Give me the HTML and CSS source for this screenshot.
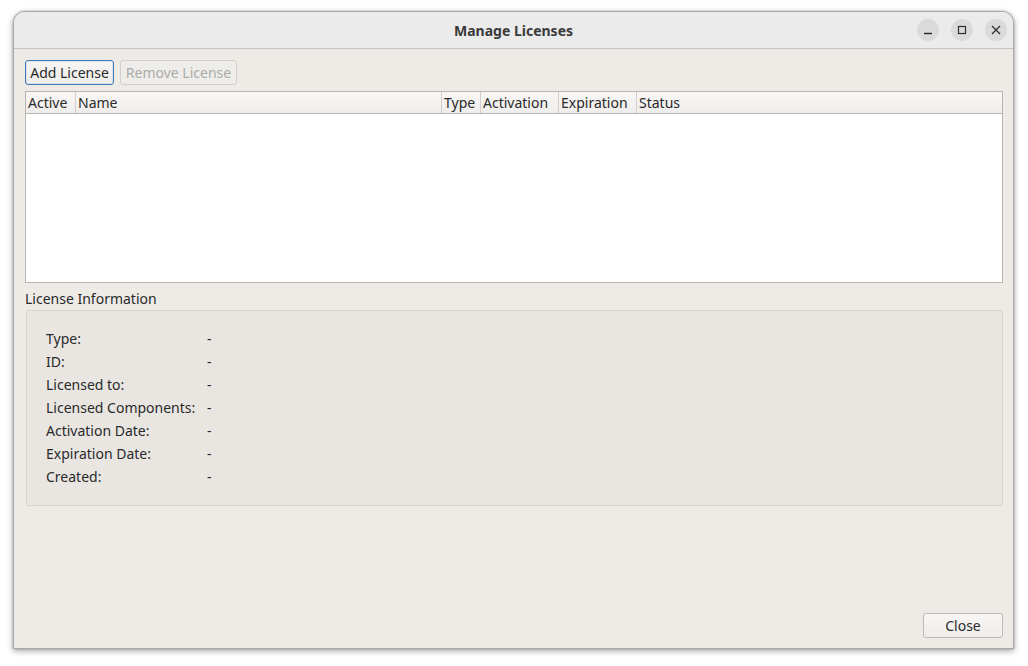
FILE: index.html
```html
<!DOCTYPE html>
<html>
<head>
<meta charset="utf-8">
<link rel="stylesheet" href="styles.css">
</head>
<body>
<div class="window">
  <div class="titlebar">
    <div class="title">Manage Licenses</div>
    <div class="controls">
      <div class="ctl"><svg width="10" height="10" viewBox="0 0 10 10"><path d="M1 8.5h8" stroke="#2e2e2e" stroke-width="1.3"/></svg></div>
      <div class="ctl"><svg width="10" height="10" viewBox="0 0 10 10"><rect x="1.5" y="1.5" width="7" height="7" fill="none" stroke="#2e2e2e" stroke-width="1.2"/></svg></div>
      <div class="ctl"><svg width="10" height="10" viewBox="0 0 10 10"><path d="M1 1L9 9M9 1L1 9" stroke="#2e2e2e" stroke-width="1.3"/></svg></div>
    </div>
  </div>
  <div class="content">
    <div class="toolbar">
      <button class="btn primary">Add License</button>
      <button class="btn disabled">Remove License</button>
    </div>
    <div class="table">
      <div class="thead">
        <div class="th c-active">Active</div>
        <div class="th c-name">Name</div>
        <div class="th c-type">Type</div>
        <div class="th c-act">Activation</div>
        <div class="th c-exp">Expiration</div>
        <div class="th c-status">Status</div>
      </div>
      <div class="tbody"></div>
    </div>
    <div class="group-label">License Information</div>
    <div class="group">
      <div class="info">
        <div class="k">Type:</div><div class="v">-</div>
        <div class="k">ID:</div><div class="v">-</div>
        <div class="k">Licensed to:</div><div class="v">-</div>
        <div class="k">Licensed Components:</div><div class="v">-</div>
        <div class="k">Activation Date:</div><div class="v">-</div>
        <div class="k">Expiration Date:</div><div class="v">-</div>
        <div class="k">Created:</div><div class="v">-</div>
      </div>
    </div>
    <div class="spacer"></div>
    <div class="footer">
      <button class="btn close">Close</button>
    </div>
  </div>
</div>
</body>
</html>
```

FILE: styles.css
```css
html, body {
  margin: 0;
  padding: 0;
  background: #ffffff;
}
body {
  width: 1028px;
  height: 666px;
  overflow: hidden;
  font-family: "Noto Sans", "DejaVu Sans", sans-serif;
  font-size: 14px;
  color: #2a2a2a;
}
.window {
  margin: 11px 0 0 13px;
  width: 1001px;
  height: 638px;
  box-sizing: border-box;
  border: 1px solid #a8a8a8;
  border-radius: 12px 12px 0 0;
  box-shadow: 0 2px 6px rgba(0,0,0,0.35), 0 0 2px rgba(0,0,0,0.25);
  display: flex;
  flex-direction: column;
  overflow: hidden;
  background: #eeebe7;
}
.titlebar {
  height: 36px;
  flex: none;
  background: #ebebeb;
  border-bottom: 1px solid #c4c4c4;
  position: relative;
  display: flex;
  align-items: center;
  justify-content: center;
}
.title {
  font-weight: bold;
  font-size: 14px;
  color: #3a3a3a;
}
.controls {
  position: absolute;
  right: 6px;
  top: 7px;
  display: flex;
  gap: 12px;
}
.ctl {
  width: 22px;
  height: 22px;
  border-radius: 50%;
  background: #dadada;
  display: flex;
  align-items: center;
  justify-content: center;
}
.content {
  flex: 1;
  display: flex;
  flex-direction: column;
  padding: 11px 10px 10px 11px;
}
.toolbar {
  display: flex;
  gap: 6px;
  height: 25px;
}
.btn {
  font-family: inherit;
  font-size: 14px;
  height: 25px;
  box-sizing: border-box;
  padding: 0 4px;
  border-radius: 3px;
  border: 1px solid #bdbab6;
  background: linear-gradient(#f7f6f5, #efedea);
  color: #2a2a2a;
  line-height: 22px;
}
.btn.primary {
  width: 89px;
  border-color: #3d7ab8;
  box-shadow: inset 0 0 0 1px rgba(90,140,200,0.15);
}
.btn.disabled {
  width: 117px;
  color: #ababab;
  border-color: #d2cfcb;
  background: #efedea;
}
.table {
  margin-top: 6px;
  height: 192px;
  box-sizing: border-box;
  border: 1px solid #b9b6b2;
  background: #ffffff;
  display: flex;
  flex-direction: column;
}
.thead {
  height: 21px;
  flex: none;
  display: flex;
  background: linear-gradient(#f8f7f6, #efedeb);
  border-bottom: 1px solid #b9b6b2;
}
.th {
  box-sizing: border-box;
  padding-left: 2px;
  line-height: 21px;
  border-right: 1px solid #d2cfcb;
  white-space: nowrap;
}
.c-active { width: 50px; }
.c-name { width: 366px; }
.c-type { width: 39px; }
.c-act { width: 78px; }
.c-exp { width: 78px; }
.c-status { flex: 1; border-right: none; }
.tbody { flex: 1; }
.group-label {
  margin-top: 6px;
  height: 19px;
  line-height: 19px;
}
.group {
  margin-top: 2px;
  margin-left: 1px;
  height: 196px;
  box-sizing: border-box;
  border: 1px solid #d6d3cf;
  border-radius: 2px;
  background: #e9e6e2;
  padding: 16px 0 0 19px;
}
.info {
  display: grid;
  grid-template-columns: 161px auto;
  grid-auto-rows: 23px;
  line-height: 23px;
}
.spacer { flex: 1; }
.footer {
  display: flex;
  justify-content: flex-end;
}
.btn.close {
  width: 80px;
  height: 25px;
}
```
